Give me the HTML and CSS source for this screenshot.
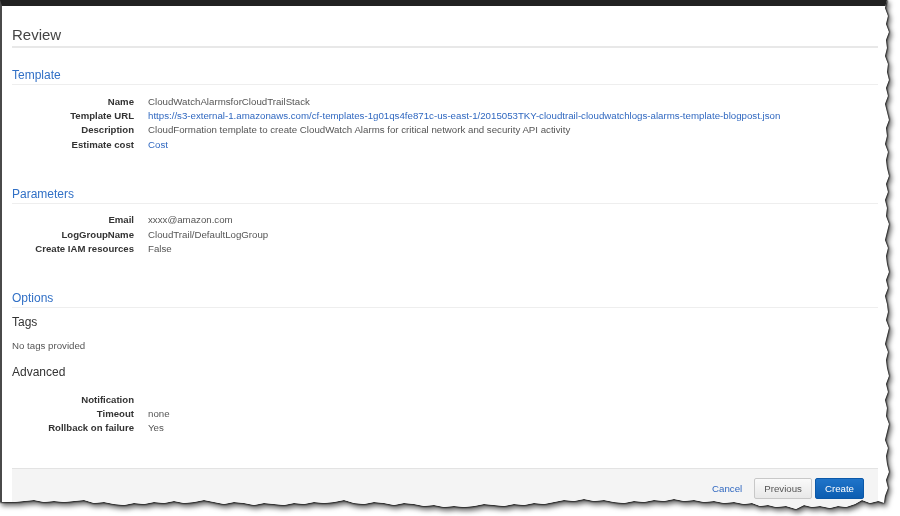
FILE: index.html
```html
<!DOCTYPE html>
<html lang="en">
<head>
    <meta charset="UTF-8">
    <meta name="viewport" content="width=device-width, initial-scale=1.0">
    <title>Review</title>
    <link rel="stylesheet" href="styles.css">
</head>
<body>
    <div class="sheet">
        <div class="paper">
            <h1 class="page-title">Review</h1>

            <section class="review-section">
                <h2 class="section-title">Template</h2>
                <dl class="props">
                    <dt>Name</dt>
                    <dd>CloudWatchAlarmsforCloudTrailStack</dd>
                    <dt>Template URL</dt>
                    <dd><a href="#">https://s3-external-1.amazonaws.com/cf-templates-1g01qs4fe871c-us-east-1/2015053TKY-cloudtrail-cloudwatchlogs-alarms-template-blogpost.json</a></dd>
                    <dt>Description</dt>
                    <dd>CloudFormation template to create CloudWatch Alarms for critical network and security API activity</dd>
                    <dt>Estimate cost</dt>
                    <dd><a href="#">Cost</a></dd>
                </dl>
            </section>

            <section class="review-section">
                <h2 class="section-title">Parameters</h2>
                <dl class="props">
                    <dt>Email</dt>
                    <dd>xxxx@amazon.com</dd>
                    <dt>LogGroupName</dt>
                    <dd>CloudTrail/DefaultLogGroup</dd>
                    <dt>Create IAM resources</dt>
                    <dd>False</dd>
                </dl>
            </section>

            <section class="review-section">
                <h2 class="section-title">Options</h2>
                <h3 class="sub-title">Tags</h3>
                <p class="note">No tags provided</p>
                <h3 class="sub-title advanced">Advanced</h3>
                <dl class="props props-advanced">
                    <dt>Notification</dt>
                    <dd></dd>
                    <dt>Timeout</dt>
                    <dd>none</dd>
                    <dt>Rollback on failure</dt>
                    <dd>Yes</dd>
                </dl>
            </section>

            <div class="wizard-footer">
                <a href="#" class="cancel-link">Cancel</a>
                <button class="btn">Previous</button>
                <button class="btn btn-primary">Create</button>
            </div>
        </div>
    </div>
</body>
</html>
```

FILE: styles.css
```css
body {
    font-family: "Liberation Sans", Arial, sans-serif;
    margin: 0;
    padding: 0;
    background-color: #fff;
    color: #555;
    overflow: hidden;
}

/* torn paper screenshot frame */
.sheet {
    width: 900px;
    height: 516px;
    filter: drop-shadow(0 0 0.8px #000) drop-shadow(0 0 0.4px #000) drop-shadow(2px 3px 2.5px rgba(0, 0, 0, 0.6));
}

.paper {
    width: 900px;
    height: 516px;
    box-sizing: border-box;
    background-color: #fff;
    border-top: 6px solid #222;
    border-left: 2px solid #4a4a4a;
    padding: 0 22px 0 10px;
    display: flex;
    flex-direction: column;
    clip-path: polygon(0 0, 887px 0, 885px 8px, 888px 16px, 886px 24px, 889px 32px, 886px 40px, 887px 48px, 885px 56px, 888px 64px, 887px 72px, 889px 80px, 886px 88px, 888px 96px, 885px 104px, 887px 112px, 889px 120px, 886px 128px, 887px 136px, 885px 144px, 888px 152px, 886px 160px, 887px 168px, 889px 176px, 886px 184px, 888px 192px, 885px 200px, 887px 208px, 886px 216px, 889px 224px, 887px 232px, 885px 240px, 888px 248px, 886px 256px, 887px 264px, 889px 272px, 886px 280px, 888px 288px, 885px 296px, 887px 304px, 888px 312px, 886px 320px, 889px 328px, 887px 336px, 885px 344px, 888px 352px, 886px 360px, 887px 368px, 889px 376px, 886px 384px, 888px 392px, 885px 400px, 887px 408px, 886px 416px, 889px 424px, 887px 432px, 885px 440px, 888px 448px, 886px 456px, 887px 464px, 889px 472px, 886px 480px, 888px 488px, 885px 496px, 884px 503px, 878px 501px, 870px 503px, 862px 500px, 855px 504px, 846px 507px, 838px 506px, 830px 508px, 820px 506px, 812px 507px, 804px 505px, 796px 509px, 786px 506px, 776px 507px, 768px 505px, 760px 506px, 752px 503px, 744px 504px, 734px 502px, 724px 503px, 714px 501px, 704px 502px, 694px 500px, 684px 501px, 674px 499px, 664px 501px, 654px 500px, 644px 502px, 634px 501px, 624px 503px, 614px 502px, 604px 500px, 594px 501px, 584px 499px, 574px 501px, 564px 500px, 554px 502px, 544px 504px, 534px 503px, 524px 505px, 514px 504px, 504px 506px, 494px 505px, 484px 504px, 474px 506px, 464px 507px, 454px 506px, 444px 507px, 434px 505px, 424px 506px, 414px 504px, 404px 503px, 394px 505px, 384px 503px, 374px 502px, 364px 504px, 354px 503px, 344px 500px, 334px 502px, 324px 503px, 314px 502px, 304px 504px, 294px 503px, 284px 505px, 274px 504px, 264px 503px, 254px 505px, 244px 503px, 234px 502px, 224px 504px, 214px 502px, 204px 500px, 194px 502px, 184px 503px, 174px 501px, 164px 503px, 154px 502px, 144px 504px, 134px 503px, 124px 505px, 114px 504px, 104px 502px, 94px 503px, 84px 500px, 74px 501px, 64px 502px, 54px 501px, 44px 502px, 34px 500px, 24px 501px, 14px 502px, 0 502px);
}

.page-title {
    margin: 0;
    padding: 20px 0 2px;
    font-size: 15px;
    line-height: 18px;
    font-weight: normal;
    color: #444;
    border-bottom: 2px solid #e8e8e8;
}

.review-section {
    margin-top: 32.5px;
}

.page-title + .review-section {
    margin-top: 18px;
}

.section-title {
    margin: 0;
    padding: 2px 0 1px;
    font-size: 12px;
    line-height: 15px;
    font-weight: normal;
    color: #3170c6;
    border-bottom: 1px solid #eee;
}

.props {
    display: grid;
    grid-template-columns: 122px 1fr;
    column-gap: 14px;
    margin: 9.5px 0 0;
    font-size: 9.7px;
    line-height: 14.4px;
}

.props dt {
    text-align: right;
    font-weight: bold;
    font-size: 9.6px;
    color: #333;
    white-space: nowrap;
}

.props dd {
    margin: 0;
    color: #555;
    white-space: nowrap;
    min-height: 14.4px;
}

.props a,
.cancel-link {
    color: #3068c0;
    text-decoration: none;
}

.sub-title {
    margin: 7px 0 0;
    font-size: 12px;
    line-height: 15px;
    font-weight: normal;
    color: #333;
}

.sub-title.advanced {
    margin-top: 12.4px;
}

.note {
    margin: 8.8px 0 0;
    font-size: 9.7px;
    line-height: 14.4px;
    color: #555;
}

.props-advanced {
    margin-top: 12.9px;
    line-height: 14px;
}

.props-advanced dd {
    min-height: 14px;
}

.wizard-footer {
    flex: 1;
    margin-top: 32.8px;
    background-color: #f4f4f4;
    border-top: 1px solid #e3e3e3;
    padding: 9px 14px 0 0;
    display: flex;
    justify-content: flex-end;
    align-items: flex-start;
    gap: 3px;
}

.cancel-link {
    font-size: 9.7px;
    line-height: 22px;
    margin-right: 9px;
}

.btn {
    height: 21px;
    padding: 0 9px;
    font-family: inherit;
    font-size: 9.7px;
    color: #555;
    border: 1px solid #c8c8c8;
    border-radius: 2px;
    background: linear-gradient(#fafafa, #e8e8e8);
    cursor: pointer;
}

.btn-primary {
    color: #fff;
    border-color: #0b58a8;
    background: linear-gradient(#1f74c9, #0c5db1);
}
```
